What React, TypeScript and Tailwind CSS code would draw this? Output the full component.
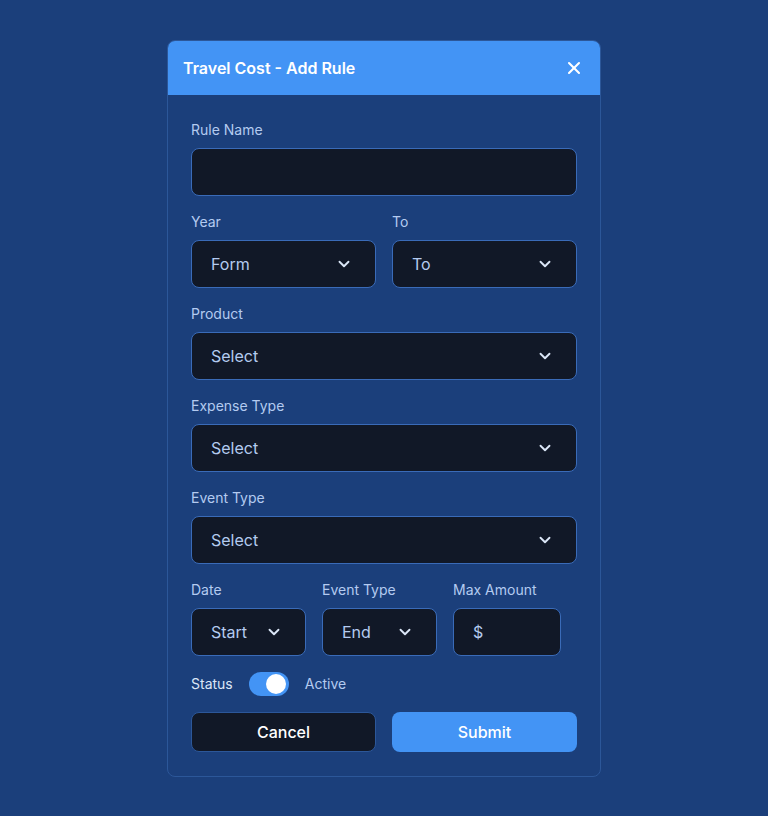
import { X, ChevronDown } from 'lucide-react';

const label = 'block text-sm leading-5 text-[#b4cbf0] mb-2';
const field =
  'flex h-12 items-center rounded-lg border border-[#3a6bb8] bg-[#111827] pl-[19px] text-base text-[#b4cbf0]';

function Select({ text, className = '' }: { text: string; className?: string }) {
  return (
    <div className={`${field} justify-between pr-[22px] ${className}`}>
      <span>{text}</span>
      <ChevronDown size={18} strokeWidth={2.5} className="text-[#dbe6f7]" />
    </div>
  );
}

function Field({ name, children, className = '' }: { name: string; children: React.ReactNode; className?: string }) {
  return (
    <div className={className}>
      <span className={label}>{name}</span>
      {children}
    </div>
  );
}

export default function App() {
  return (
    <div
      className="min-h-[816px] bg-[#1b3f7b] pt-10"
      style={{ fontFamily: 'Inter, "Noto Sans", sans-serif' }}
    >
      <div className="mx-auto w-[434px] overflow-hidden rounded-lg border border-[#2c5799] bg-[#1b3f7b]">
        <div className="flex h-[54px] items-center justify-between bg-[#4394f5] pl-[15px] pr-4">
          <h2 className="text-base font-semibold text-white">Travel Cost - Add Rule</h2>
          <X size={20} strokeWidth={2.5} className="text-white" />
        </div>

        <div className="flex flex-col gap-4 px-[23px] pt-[25px] pb-6">
          <Field name="Rule Name">
            <div className={field} />
          </Field>

          <div className="grid grid-cols-2 gap-4">
            <Field name="Year">
              <Select text="Form" />
            </Field>
            <Field name="To">
              <Select text="To" />
            </Field>
          </div>

          <Field name="Product">
            <Select text="Select" />
          </Field>
          <Field name="Expense Type">
            <Select text="Select" />
          </Field>
          <Field name="Event Type">
            <Select text="Select" />
          </Field>

          <div className="flex gap-4">
            <Field name="Date" className="w-[115px]">
              <Select text="Start" />
            </Field>
            <Field name="Event Type" className="w-[115px]">
              <Select text="End" />
            </Field>
            <Field name="Max Amount" className="w-[108px]">
              <div className={field}>$</div>
            </Field>
          </div>

          <div className="flex h-6 items-center text-sm text-[#b4cbf0]">
            <span className="text-[#dbe6f7]">Status</span>
            <div className="ml-4 flex h-6 w-10 items-center justify-end rounded-full bg-[#4394f5] px-[3px]">
              <div className="h-5 w-5 rounded-full bg-white" />
            </div>
            <span className="ml-4">Active</span>
          </div>

          <div className="grid grid-cols-2 gap-4">
            <button className="h-10 rounded-lg border border-[#2c5799] bg-[#111827] text-base font-medium text-white">
              Cancel
            </button>
            <button className="h-10 rounded-lg bg-[#4394f5] text-base font-medium text-white">
              Submit
            </button>
          </div>
        </div>
      </div>
    </div>
  );
}
